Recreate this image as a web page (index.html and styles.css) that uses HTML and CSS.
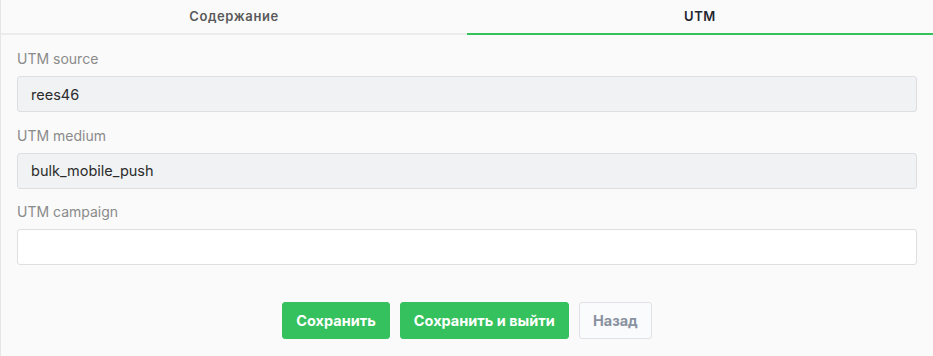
FILE: index.html
```html
<!DOCTYPE html>
<html lang="ru">
<head>
    <meta charset="UTF-8">
    <meta name="viewport" content="width=device-width, initial-scale=1.0">
    <title>UTM</title>
    <link rel="stylesheet" href="styles.css">
</head>
<body>
    <div class="panel">
        <div class="tabs">
            <div class="tab">Содержание</div>
            <div class="tab active">UTM</div>
        </div>
        <form class="utm-form">
            <div class="field">
                <label>UTM source</label>
                <input type="text" value="rees46" disabled>
            </div>
            <div class="field">
                <label>UTM medium</label>
                <input type="text" value="bulk_mobile_push" disabled>
            </div>
            <div class="field">
                <label>UTM campaign</label>
                <input type="text" value="">
            </div>
            <div class="actions">
                <button type="button" class="btn btn-green">Сохранить</button>
                <button type="button" class="btn btn-green">Сохранить и выйти</button>
                <button type="button" class="btn btn-light">Назад</button>
            </div>
        </form>
    </div>
</body>
</html>
```
FILE: styles.css
```css
body {
    margin: 0;
    background-color: #fafafa;
    font-family: Inter, "Noto Sans", sans-serif;
}
.panel {
    border-left: 1px solid #e6e6e6;
    min-height: 356px;
    box-sizing: border-box;
}
.tabs {
    display: flex;
    border-bottom: 2px solid #ececec;
}
.tab {
    flex: 1;
    text-align: center;
    height: 33px;
    line-height: 33px;
    font-size: 13px;
    font-weight: 600;
    color: #5a5a5a;
    letter-spacing: 0.6px;
}
.tab.active {
    color: #1f2430;
    margin-bottom: -2px;
    border-bottom: 2px solid #35c15b;
}
.utm-form {
    padding: 14px 16px 0 16px;
}
.field {
    margin-bottom: 13.5px;
}
.field label {
    display: block;
    font-size: 14px;
    line-height: 20px;
    color: #8a8a8a;
    margin-bottom: 7px;
}
.field input {
    display: block;
    width: 100%;
    box-sizing: border-box;
    height: 36px;
    padding: 0 13px;
    border: 1px solid #dedfe3;
    border-radius: 3px;
    background-color: #fff;
    font-family: inherit;
    font-size: 14.5px;
    color: #2b2b2b;
}
.field input:disabled {
    background-color: #f1f2f4;
    color: #2b2b2b;
}
.actions {
    display: flex;
    justify-content: center;
    gap: 10px;
    padding-top: 23px;
}
.btn {
    height: 37px;
    padding: 0 13px;
    border-radius: 3px;
    font-family: inherit;
    font-size: 14.5px;
    font-weight: 700;
    cursor: pointer;
}
.btn-green {
    background-color: #35c15d;
    border: 1px solid #35c15d;
    color: #fff;
}
.btn-light {
    background-color: #fafbfc;
    border: 1px solid #dfe1e6;
    color: #8a92a1;
}
```
